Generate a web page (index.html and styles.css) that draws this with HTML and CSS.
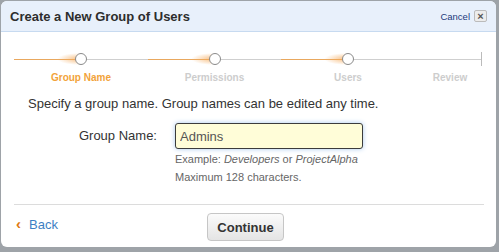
FILE: index.html
```html
<!DOCTYPE html>
<html lang="en">
<head>
<meta charset="utf-8">
<title>Create a New Group of Users</title>
<link rel="stylesheet" href="styles.css">
</head>
<body>
<div class="dialog">
  <div class="dlg-head">
    <h1>Create a New Group of Users</h1>
    <a class="cancel" href="#">Cancel</a>
    <span class="close">&#215;</span>
  </div>

  <div class="wizard">
    <div class="step done" style="width:134px">
      <div class="track"><span class="dot"></span></div>
      <div class="step-name">Group Name</div>
    </div>
    <div class="step" style="width:133px">
      <div class="track"><span class="dot"></span></div>
      <div class="step-name">Permissions</div>
    </div>
    <div class="step" style="width:134px">
      <div class="track"><span class="dot"></span></div>
      <div class="step-name">Users</div>
    </div>
    <div class="step last" style="width:67px">
      <div class="track"></div>
      <div class="step-name">Review</div>
    </div>
  </div>

  <p class="intro">Specify a group name. Group names can be edited any time.</p>

  <div class="form-row">
    <label class="field-label" for="gname">Group Name:</label>
    <div>
      <input id="gname" class="field" type="text" value="Admins">
      <div class="hint">Example: <i>Developers</i> or <i>ProjectAlpha</i></div>
      <div class="hint">Maximum 128 characters.</div>
    </div>
  </div>

  <hr class="sep">

  <div class="dlg-foot">
    <a class="back" href="#"><span class="chev">&#8249;</span>Back</a>
    <button class="btn">Continue</button>
    <span></span>
  </div>
</div>
</body>
</html>
```

FILE: styles.css
```css
body {
	margin: 0;
	background: #9ea3a8;
	font-family: "Liberation Sans", Arial, sans-serif;
	font-size: 13px;
	color: #333;
}
.dialog {
	width: 495px;
	height: 246px;
	margin: 1px 0 0 1px;
	background: #fff;
	border-radius: 6px;
	overflow: hidden;
}
.dlg-head {
	height: 30px;
	display: flex;
	align-items: center;
	background: #e8f0fb;
	border-bottom: 1px solid #c7daf0;
	padding: 0 9px 0 9px;
}
.dlg-head h1 {
	flex: 1;
	margin: 0;
	font-size: 13px;
	font-weight: bold;
	color: #2d2d2d;
}
.cancel {
	font-size: 9.5px;
	color: #1c3a7c;
	text-decoration: none;
	margin-right: 4px;
}
.close {
	width: 11px;
	height: 10px;
	border: 1px solid #bbb;
	border-radius: 2px;
	background: #ececec;
	color: #555;
	font-size: 11px;
	line-height: 10px;
	text-align: center;
	font-weight: bold;
}

/* wizard steps */
.wizard {
	display: flex;
	margin: 20px 0 0 13px;
}
.track {
	position: relative;
	height: 14px;
	display: flex;
	justify-content: center;
	align-items: center;
}
.track::before {
	content: "";
	position: absolute;
	left: 0;
	right: 0;
	top: 7px;
	height: 1px;
	background: linear-gradient(to right, #e9a85e 50%, #cfcfcf 50%);
}
.track::after {
	content: "";
	position: absolute;
	left: 50%;
	top: 1px;
	width: 22px;
	height: 12px;
	margin-left: -24px;
	background: radial-gradient(ellipse at right, rgba(245,170,90,0.75), rgba(245,170,90,0) 70%);
}
.dot {
	position: relative;
	z-index: 1;
	width: 10px;
	height: 10px;
	border: 1.5px solid #8a8a8a;
	border-radius: 50%;
	background: #fff;
}
.last .track::before {
	background: #cfcfcf;
}
.last .track::after {
	display: none;
}
.last .track {
	border-right: 1px solid #bbb;
}
.step-name {
	margin-top: 6px;
	text-align: center;
	font-size: 10px;
	line-height: 12px;
	font-weight: bold;
	color: #cdcdcd;
}
.last .step-name {
	padding-left: 3px;
}
.done .step-name {
	color: #f2a33a;
}

.intro {
	margin: 12px 0 0 27px;
	line-height: 16px;
}
.form-row {
	display: grid;
	grid-template-columns: 129px auto;
	column-gap: 18px;
	margin: 11px 0 0 27px;
}
.field-label {
	text-align: right;
	line-height: 26px;
}
.field {
	box-sizing: border-box;
	width: 188px;
	height: 26px;
	margin: 0;
	padding: 0 4px;
	border: 1px solid #3c3c3c;
	border-radius: 3px;
	background: #fffdd8;
	box-shadow: 0 0 5px #a9c9ee;
	font-family: "Liberation Sans", Arial, sans-serif;
	font-size: 13px;
	color: #555;
	outline: none;
}
.hint {
	font-size: 11px;
	line-height: 18px;
	color: #666;
}
.hint:first-of-type {
	margin-top: 1px;
}

.sep {
	margin: 18px 12px 0 13px;
	border: 0;
	border-top: 1px solid #dcdcdc;
	height: 0;
}
.dlg-foot {
	display: grid;
	grid-template-columns: 1fr auto 1fr;
	align-items: start;
	margin-top: 8px;
	padding: 0 0 0 15px;
}
.back {
	margin-top: 2px;
	color: #3d7fc4;
	text-decoration: none;
	font-size: 13px;
	line-height: 18px;
}
.chev {
	color: #e07a10;
	font-weight: bold;
	font-size: 15px;
	margin-right: 8px;
}
.btn {
	width: 77px;
	height: 28px;
	margin-right: 21px;
	border: 1px solid #c6c6c6;
	border-radius: 4px;
	background: linear-gradient(#fbfbfb, #e4e4e4);
	font-family: "Liberation Sans", Arial, sans-serif;
	font-size: 13px;
	font-weight: bold;
	color: #333;
}
```
